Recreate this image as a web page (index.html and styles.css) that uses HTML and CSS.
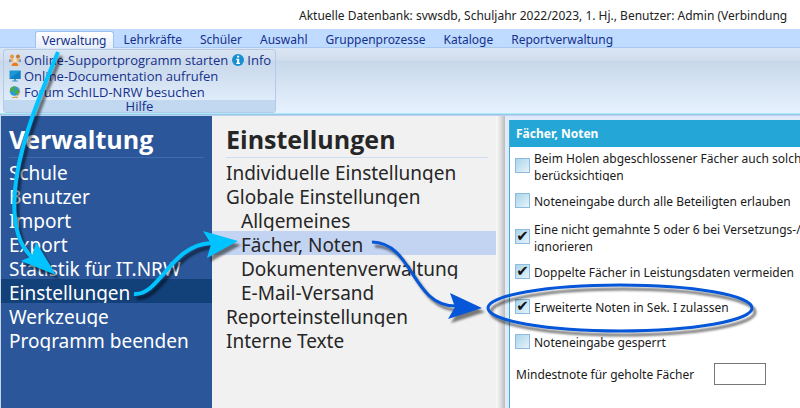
FILE: index.html
```html
<!DOCTYPE html>
<html lang="de">
<head>
    <meta charset="UTF-8">
    <meta name="viewport" content="width=device-width, initial-scale=1.0">
    <title>SchILD-NRW</title>
    <link rel="stylesheet" href="styles.css">
</head>
<body>
    <div class="app">
        <header class="title-bar">Aktuelle Datenbank: svwsdb, Schuljahr 2022/2023, 1. Hj., Benutzer: Admin (Verbindung</header>

        <nav class="tabs">
            <button type="button" class="tab active">Verwaltung</button>
            <button type="button" class="tab">Lehrkräfte</button>
            <button type="button" class="tab">Schüler</button>
            <button type="button" class="tab">Auswahl</button>
            <button type="button" class="tab">Gruppenprozesse</button>
            <button type="button" class="tab">Kataloge</button>
            <button type="button" class="tab">Reportverwaltung</button>
        </nav>

        <div class="ribbon">
            <div class="ribbon-group">
                <div class="ribbon-items">
                    <div class="ribbon-column">
                        <a href="#" class="ribbon-link">
                            <svg class="icon" viewBox="0 0 12 12">
                                <circle cx="3" cy="2.6" r="2" fill="#e8963c"/>
                                <circle cx="9" cy="2.6" r="2" fill="#c9772c"/>
                                <path d="M0 8V5.5Q3 3.5 6 5.5 9 3.5 12 5.5V8H9L6 7 3 8Z" fill="#e9b273"/>
                                <circle cx="6" cy="6.6" r="2" fill="#f7e3c4"/>
                                <path d="M2.500 12Q3 8.500 6 8.500T9.500 12Z" fill="#f27a1a"/>
                                <path d="M0 5.500H2V8H0ZM10 5.500H12V8H10Z" fill="#7c93bb"/>
                            </svg>
                            <span>Online-Supportprogramm starten</span>
                        </a>
                        <a href="#" class="ribbon-link">
                            <svg class="icon" viewBox="0 0 12 12">
                                <path d="M0.500 0.500H11.500V9H0.500Z" fill="#1b96d6"/>
                                <path d="M0.500 9L11.500 0.500V9Z" fill="#0f80c2"/>
                                <path d="M5 9H7V10.500H9V11.500H3V10.500H5Z" fill="#4a9bc8"/>
                            </svg>
                            <span>Online-Documentation aufrufen</span>
                        </a>
                        <a href="#" class="ribbon-link">
                            <svg class="icon" viewBox="0 0 12 12">
                                <path d="M9.500 1A6 6 0 0 1 8 10.500L6.500 11H9V12H3V11H5Q9 10.500 10 6Z" fill="#e0a33c"/>
                                <circle cx="5.500" cy="5" r="4.800" fill="#2a9bd8"/>
                                <path d="M1.500 2.500Q4 0 6 0.500L6.500 2 4.500 3.500 5 5 3 6 1 4.500ZM6 4.500L9 4 9.500 6.500 7 9 6 7Z" fill="#4fae35"/>
                            </svg>
                            <span>Forum SchILD-NRW besuchen</span>
                        </a>
                    </div>
                    <a href="#" class="ribbon-link">
                        <svg class="icon" viewBox="0 0 12 12">
                            <circle cx="6" cy="6" r="6" fill="#1590d3"/>
                            <path d="M5 1.800H7.200V3.600H5ZM4.300 4.800H7.200V8.800H8V10H4.300V8.800H5V6H4.300Z" fill="#fff"/>
                        </svg>
                        <span>Info</span>
                    </a>
                </div>
                <div class="ribbon-caption">Hilfe</div>
            </div>
        </div>

        <main class="content">
            <nav class="menu menu-main">
                <h1>Verwaltung</h1>
                <a href="#">Schule</a>
                <a href="#">Benutzer</a>
                <a href="#">Import</a>
                <a href="#">Export</a>
                <a href="#">Statistik für IT.NRW</a>
                <a href="#" class="selected">Einstellungen</a>
                <a href="#">Werkzeuge</a>
                <a href="#">Programm beenden</a>
            </nav>

            <nav class="menu menu-sub">
                <h1>Einstellungen</h1>
                <a href="#">Individuelle Einstellungen</a>
                <a href="#">Globale Einstellungen</a>
                <a href="#" class="child">Allgemeines</a>
                <a href="#" class="child selected">Fächer, Noten</a>
                <a href="#" class="child">Dokumentenverwaltung</a>
                <a href="#" class="child">E-Mail-Versand</a>
                <a href="#">Reporteinstellungen</a>
                <a href="#">Interne Texte</a>
            </nav>

            <div class="splitter"></div>

            <section class="workspace">
                <form class="panel">
                    <h2>Fächer, Noten</h2>
                    <div class="option two-lines">
                        <input type="checkbox" id="abgeschlossen">
                        <label for="abgeschlossen">Beim Holen abgeschlossener Fächer auch solche<br>berücksichtigen</label>
                    </div>
                    <div class="option">
                        <input type="checkbox" id="beteiligte">
                        <label for="beteiligte">Noteneingabe durch alle Beteiligten erlauben</label>
                    </div>
                    <div class="option two-lines">
                        <input type="checkbox" id="gemahnt" checked>
                        <label for="gemahnt">Eine nicht gemahnte 5 oder 6 bei Versetzungs-/<br>ignorieren</label>
                    </div>
                    <div class="option">
                        <input type="checkbox" id="doppelt" checked>
                        <label for="doppelt">Doppelte Fächer in Leistungsdaten vermeiden</label>
                    </div>
                    <div class="option">
                        <input type="checkbox" id="erweitert" checked>
                        <label for="erweitert">Erweiterte Noten in Sek. I zulassen</label>
                    </div>
                    <div class="option">
                        <input type="checkbox" id="gesperrt">
                        <label for="gesperrt">Noteneingabe gesperrt</label>
                    </div>
                    <div class="minimum">
                        <label for="mindestnote">Mindestnote für geholte Fächer</label>
                        <input type="text" id="mindestnote">
                    </div>
                </form>
            </section>
        </main>

        <!-- Arrows showing the path through the menus -->
        <svg class="arrows" width="800" height="408" viewBox="0 0 800 408">
            <g class="cyan">
                <path class="line" d="M58 52C44 86 31 116 23 147C10 195 10 240 34 259"/>
                <path class="head" d="M36 242L56 275 21 261 32 256Z"/>
                <path class="line" d="M134 294C160 296 170 245 211 243"/>
                <path class="head" d="M203 231L238 241 207 258 211 244Z"/>
            </g>
            <g class="blue">
                <path class="line" d="M372 242C414 243 411 306 456 306"/>
                <path class="head" d="M450 293L482 308 448 319 455 307Z"/>
                <ellipse class="line" cx="620" cy="308" rx="132" ry="23"/>
            </g>
        </svg>
    </div>
</body>
</html>
```
FILE: styles.css
```css
/* Global Styles */
* {
    box-sizing: border-box;
}
body {
    margin: 0;
    font-family: "Noto Sans", "Open Sans", sans-serif;
    font-size: 12px;
    color: #222;
    background-color: #fff;
}
a {
    color: inherit;
    text-decoration: none;
}
.app {
    position: relative;
    display: flex;
    flex-direction: column;
    min-height: 100vh;
    overflow: hidden;
}

/* Title Bar */
.title-bar {
    height: 29px;
    padding-left: 299px;
    line-height: 31px;
    white-space: nowrap;
    overflow: hidden;
}

/* Ribbon */
.tabs {
    display: flex;
    height: 19px;
    padding: 2px 0 0 35px;
    background-color: #bfdbff;
    border-bottom: 1px solid #a9c8f0;
}
.tab {
    height: 17px;
    padding: 0 9px;
    border: none;
    background: none;
    font-family: inherit;
    font-size: 12px;
    line-height: 18px;
    color: #15308b;
}
.tab.active {
    margin-right: 1px;
    padding: 0 6px;
    background: linear-gradient(#fff, #e6eefa);
    border: 1px solid #9fc3ee;
    border-bottom: none;
    border-radius: 3px 3px 0 0;
    line-height: 17px;
}
.ribbon {
    padding: 1px 3px;
    background: linear-gradient(#dbe5f3, #d1deee 18%, #c8d8ea 20%, #e7f2ff);
    border-bottom: 1px solid #9ec7e8;
    box-shadow: inset 0 -1px #a6ebf7;
    color: #15308b;
    font-family: "Open Sans", "Noto Sans", sans-serif;
    font-size: 13px;
}
.ribbon-group {
    width: 273px;
    border: 1px solid #b4cae6;
    border-radius: 3px;
}
.ribbon-items {
    display: flex;
    align-items: flex-start;
    gap: 4px;
    padding: 2px 5px 0;
}
.ribbon-link {
    display: flex;
    align-items: center;
    gap: 3px;
    height: 16px;
    line-height: 16px;
    white-space: nowrap;
}
.icon {
    flex: none;
    width: 12px;
    height: 12px;
}
.ribbon-caption {
    height: 12px;
    line-height: 13px;
    text-align: center;
    background-color: #c1d8f0;
}

/* Menus */
.content {
    display: flex;
    flex: 1;
    border-top: 1px solid #b9d0f0;
}
.menu {
    padding-bottom: 20px;
    font-size: 19px;
}
.menu h1 {
    height: 42px;
    margin: 0 8px 1px;
    font-family: "Open Sans", "Noto Sans", sans-serif;
    font-size: 25px;
    line-height: 47px;
    border-bottom: 1px solid;
}
.menu a {
    display: block;
    height: 24px;
    padding-left: 8px;
    line-height: 28px;
    white-space: nowrap;
    overflow: hidden;
}
.menu-main {
    width: 212px;
    color: #fff;
    background-color: #2b579a;
    border-left: 1px solid #c5d5ea;
}
.menu-main h1 {
    border-color: #3f6cb0;
}
.menu-main .selected {
    background-color: #124078;
}
.menu-sub {
    width: 284px;
    color: #262626;
    background-color: #f1f1f1;
}
.menu-sub h1 {
    margin: 0 8px 1px 14px;
    border-color: #cfddf3;
}
.menu-sub a {
    padding-left: 14px;
}
.menu-sub .child {
    padding-left: 29px;
}
.menu-sub .selected {
    background-color: #c3d4f2;
}
.splitter {
    width: 9px;
    background: linear-gradient(to right, #fafafa, #e6e6e6 40%, #bcbcbc);
}

/* Settings Panel */
.workspace {
    flex: 1;
    min-width: 0;
    padding: 4px 0 0 4px;
    background-color: #dfeafa;
}
.panel {
    height: 100%;
    background-color: #fff;
    border-left: 1px solid #45a9d3;
    overflow: hidden;
    color: #1a1a1a;
}
.panel h2 {
    margin: 0;
    padding-left: 6px;
    font-size: 12px;
    line-height: 27px;
    color: #fff;
    background-color: #24a6d6;
}
.option {
    display: flex;
    align-items: center;
    gap: 4px;
    height: 35px;
    padding-left: 5px;
    line-height: 17px;
    white-space: nowrap;
}
.option.two-lines {
    height: 36px;
}
.option label {
    padding-top: 1px;
}
.two-lines label {
    height: 32px;
    overflow: hidden;
}
.option input {
    appearance: none;
    flex: none;
    width: 15px;
    height: 15px;
    margin: 0;
    border: 1px solid #8dbbe0;
    background: linear-gradient(135deg, #a9d5ea, #e6f3fb);
}
.option input:checked::before {
    content: "✔";
    display: block;
    font-family: "DejaVu Sans", sans-serif;
    font-size: 15px;
    line-height: 13px;
    text-align: center;
    color: #111;
}
.minimum {
    display: flex;
    align-items: center;
    gap: 20px;
    padding: 4px 0 20px 6px;
}
.minimum input {
    width: 52px;
    height: 22px;
    border: 1px solid #777;
    background-color: #fff;
}

/* Arrows */
.arrows {
    position: absolute;
    top: 0;
    left: 0;
    pointer-events: none;
}
.arrows g {
    filter: drop-shadow(3px 4px 1px rgba(0, 0, 0, 0.5));
}
.line {
    fill: none;
    stroke-width: 4;
}
.cyan .line {
    stroke: #00c3ff;
}
.cyan .head {
    fill: #00c3ff;
}
.blue .line {
    stroke: #0556d8;
    stroke-width: 3;
}
.blue .head {
    fill: #0556d8;
}
```
